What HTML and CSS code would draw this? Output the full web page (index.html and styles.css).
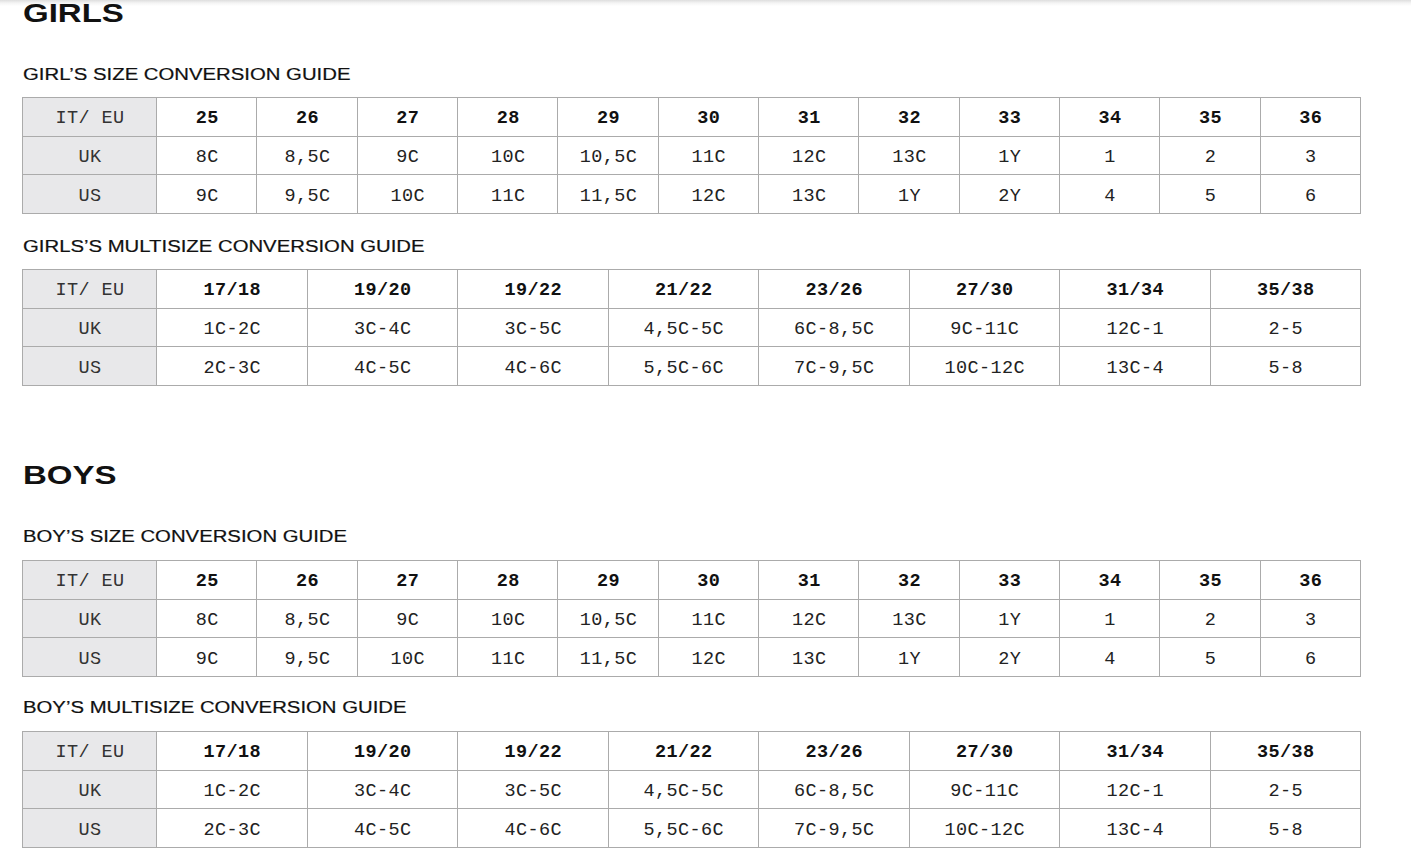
FILE: index.html
```html
<!DOCTYPE html>
<html lang="en">
<head>
<meta charset="utf-8">
<title>Size conversion guide</title>
<link rel="stylesheet" href="styles.css">
</head>
<body>
<main class="page">
  <section class="group group-girls">
    <h1 class="group-title"><span class="wide">GIRLS</span></h1>

    <h2 class="guide-title"><span class="wide">GIRL’S SIZE CONVERSION GUIDE</span></h2>
    <table class="size-table">
      <colgroup><col class="label-col"><col span="12"></colgroup>
      <tr class="head-row"><th>IT/ EU</th><td>25</td><td>26</td><td>27</td><td>28</td><td>29</td><td>30</td><td>31</td><td>32</td><td>33</td><td>34</td><td>35</td><td>36</td></tr>
      <tr><th>UK</th><td>8C</td><td>8,5C</td><td>9C</td><td>10C</td><td>10,5C</td><td>11C</td><td>12C</td><td>13C</td><td>1Y</td><td>1</td><td>2</td><td>3</td></tr>
      <tr><th>US</th><td>9C</td><td>9,5C</td><td>10C</td><td>11C</td><td>11,5C</td><td>12C</td><td>13C</td><td>1Y</td><td>2Y</td><td>4</td><td>5</td><td>6</td></tr>
    </table>

    <h2 class="guide-title guide-title-next"><span class="wide">GIRLS’S MULTISIZE CONVERSION GUIDE</span></h2>
    <table class="size-table">
      <colgroup><col class="label-col"><col span="8"></colgroup>
      <tr class="head-row"><th>IT/ EU</th><td>17/18</td><td>19/20</td><td>19/22</td><td>21/22</td><td>23/26</td><td>27/30</td><td>31/34</td><td>35/38</td></tr>
      <tr><th>UK</th><td>1C-2C</td><td>3C-4C</td><td>3C-5C</td><td>4,5C-5C</td><td>6C-8,5C</td><td>9C-11C</td><td>12C-1</td><td>2-5</td></tr>
      <tr><th>US</th><td>2C-3C</td><td>4C-5C</td><td>4C-6C</td><td>5,5C-6C</td><td>7C-9,5C</td><td>10C-12C</td><td>13C-4</td><td>5-8</td></tr>
    </table>
  </section>

  <section class="group group-boys">
    <h1 class="group-title"><span class="wide">BOYS</span></h1>

    <h2 class="guide-title"><span class="wide">BOY’S SIZE CONVERSION GUIDE</span></h2>
    <table class="size-table">
      <colgroup><col class="label-col"><col span="12"></colgroup>
      <tr class="head-row"><th>IT/ EU</th><td>25</td><td>26</td><td>27</td><td>28</td><td>29</td><td>30</td><td>31</td><td>32</td><td>33</td><td>34</td><td>35</td><td>36</td></tr>
      <tr><th>UK</th><td>8C</td><td>8,5C</td><td>9C</td><td>10C</td><td>10,5C</td><td>11C</td><td>12C</td><td>13C</td><td>1Y</td><td>1</td><td>2</td><td>3</td></tr>
      <tr><th>US</th><td>9C</td><td>9,5C</td><td>10C</td><td>11C</td><td>11,5C</td><td>12C</td><td>13C</td><td>1Y</td><td>2Y</td><td>4</td><td>5</td><td>6</td></tr>
    </table>

    <h2 class="guide-title guide-title-next"><span class="wide">BOY’S MULTISIZE CONVERSION GUIDE</span></h2>
    <table class="size-table">
      <colgroup><col class="label-col"><col span="8"></colgroup>
      <tr class="head-row"><th>IT/ EU</th><td>17/18</td><td>19/20</td><td>19/22</td><td>21/22</td><td>23/26</td><td>27/30</td><td>31/34</td><td>35/38</td></tr>
      <tr><th>UK</th><td>1C-2C</td><td>3C-4C</td><td>3C-5C</td><td>4,5C-5C</td><td>6C-8,5C</td><td>9C-11C</td><td>12C-1</td><td>2-5</td></tr>
      <tr><th>US</th><td>2C-3C</td><td>4C-5C</td><td>4C-6C</td><td>5,5C-6C</td><td>7C-9,5C</td><td>10C-12C</td><td>13C-4</td><td>5-8</td></tr>
    </table>
  </section>
</main>
</body>
</html>
```

FILE: styles.css
```css
html {
  background: #fff linear-gradient(to bottom, #dedede 0, #f4f4f4 3px, #fff 6px) no-repeat;
}

body {
  margin: 0;
  font-family: "Liberation Sans", Arial, sans-serif;
  color: #111;
}

.page {
  padding: 0 0 0 22px;
}

.wide {
  display: inline-block;
  transform: scaleX(1.27);
  transform-origin: 0 50%;
  white-space: nowrap;
}

.group-title {
  margin: 0;
  font-size: 26px;
  line-height: 26px;
  font-weight: 700;
  padding-left: 1px;
}

.group-boys {
  margin-top: 76px;
}

.guide-title {
  margin: 41px 0 14px;
  font-size: 16px;
  line-height: 16px;
  font-weight: 400;
  color: #111;
  padding-left: 1px;
  -webkit-text-stroke: 0.2px #111;
}

.guide-title-next {
  margin-top: 25px;
}

.group-boys .guide-title {
  margin-bottom: 15px;
}

.group-boys .guide-title-next {
  margin-top: 23px;
}

.size-table {
  width: 1339px;
  table-layout: fixed;
  border-collapse: collapse;
  font-family: "Liberation Mono", "DejaVu Sans Mono", monospace;
  font-size: 18.5px;
  letter-spacing: 0.4px;
  color: #222;
}

.label-col {
  width: 134px;
}

.size-table th,
.size-table td {
  height: 33.67px;
  padding: 4px 0 0 1px;
  border: 1px solid #ababab;
  text-align: center;
  vertical-align: middle;
  font-weight: 400;
}

.size-table th {
  background: #e8e8ea;
  color: #333;
}

.head-row td {
  font-weight: 700;
  color: #111;
}
```
